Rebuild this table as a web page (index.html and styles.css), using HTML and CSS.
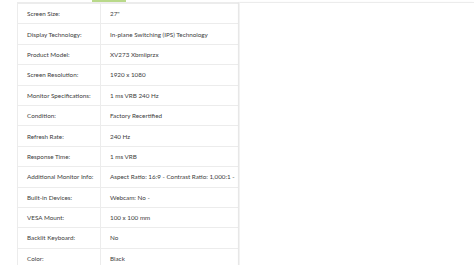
FILE: index.html
```html
<!DOCTYPE html>
<html>
<head>
<meta charset="utf-8">
<link rel="stylesheet" href="styles.css">
</head>
<body>
<div class="page">
  <div class="specs">
    <div class="tabs"><span class="tab-active"></span></div>
    <table class="spec-table">
      <colgroup><col class="col-label"><col class="col-value"></colgroup>
      <tr><td class="label">Screen Size:</td><td class="value">27"</td></tr>
      <tr><td class="label">Display Technology:</td><td class="value">In-plane Switching (IPS) Technology</td></tr>
      <tr><td class="label">Product Model:</td><td class="value">XV273 Xbmiiprzx</td></tr>
      <tr><td class="label">Screen Resolution:</td><td class="value">1920 x 1080</td></tr>
      <tr><td class="label">Monitor Specifications:</td><td class="value">1 ms VRB 240 Hz</td></tr>
      <tr><td class="label">Condition:</td><td class="value">Factory Recertified</td></tr>
      <tr><td class="label">Refresh Rate:</td><td class="value">240 Hz</td></tr>
      <tr><td class="label">Response Time:</td><td class="value">1 ms VRB</td></tr>
      <tr><td class="label">Additional Monitor Info:</td><td class="value">Aspect Ratio: 16:9 - Contrast Ratio: 1,000:1 -</td></tr>
      <tr><td class="label">Built-in Devices:</td><td class="value">Webcam: No -</td></tr>
      <tr><td class="label">VESA Mount:</td><td class="value">100 x 100 mm</td></tr>
      <tr><td class="label">Backlit Keyboard:</td><td class="value">No</td></tr>
      <tr><td class="label">Color:</td><td class="value">Black</td></tr>
    </table>
  </div>
  <div class="side"></div>
</div>
</body>
</html>
```
FILE: styles.css
```css
html, body {
  margin: 0;
  padding: 0;
  background: #fff;
  font-family: Lato, "Open Sans", sans-serif;
  color: #404040;
}
.page {
  display: flex;
  align-items: flex-start;
  height: 265px;
  overflow: hidden;
}
.specs {
  margin-left: 17px;
  width: 222px;
  flex: none;
}
.tabs {
  height: 2px;
  border-bottom: 1px solid #ececec;
}
.tab-active {
  display: block;
  margin-left: 75px;
  width: 34px;
  height: 2px;
  background: #b9d98a;
}
.spec-table {
  width: 100%;
  table-layout: fixed;
  border-collapse: collapse;
  font-size: 6.3px;
}
.col-label {
  width: 83px;
}
.spec-table td {
  border: 1px solid #ececec;
  height: 19.4px;
  padding: 0 0 0 9px;
  vertical-align: middle;
  white-space: nowrap;
  overflow: hidden;
}
.side {
  flex: 1;
  margin-top: 2px;
  height: 270px;
  border-top: 1px solid #ececec;
  border-left: 1px solid #f2f2f2;
  box-shadow: -1px 0 2px rgba(0,0,0,0.03);
}
```
